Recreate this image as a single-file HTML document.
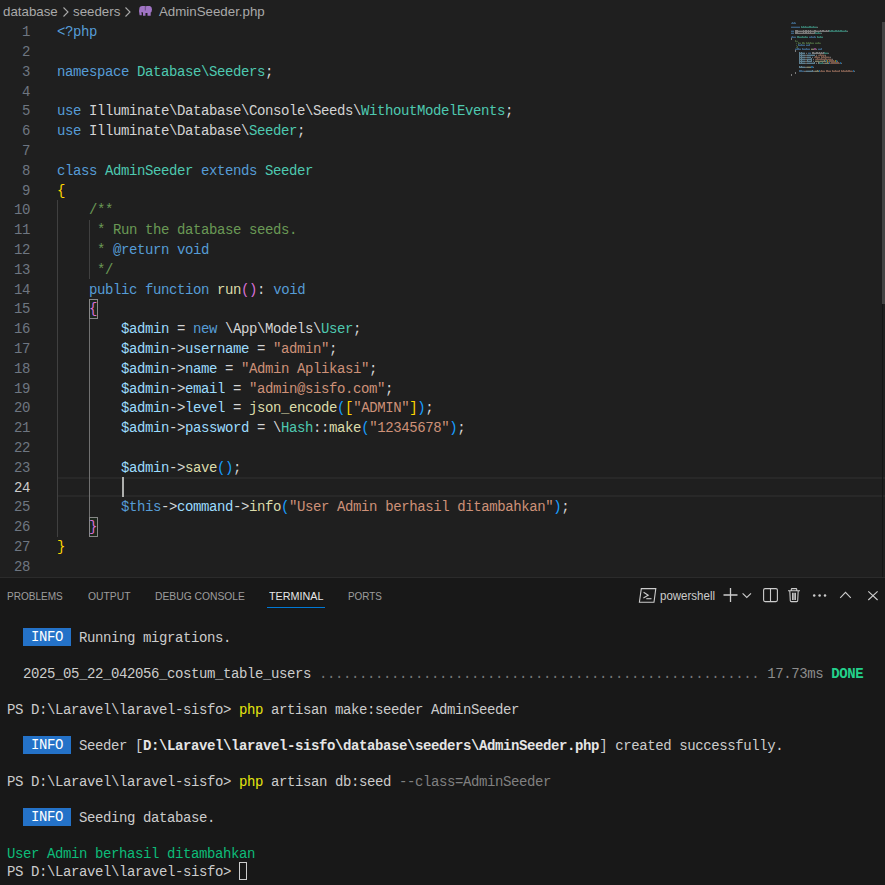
<!DOCTYPE html>
<html><head><meta charset="utf-8"><style>
*{margin:0;padding:0;box-sizing:border-box}
html,body{width:885px;height:885px;overflow:hidden;background:#1f1f1f}
body{position:relative;font-family:"Liberation Sans",sans-serif}
.crumb{position:absolute;left:0;top:0.5px;width:885px;height:22px;color:#a9a9a9;font-size:13.3px;line-height:22px;white-space:nowrap}
.crumb span{position:absolute;top:0}
.ln{position:absolute;left:0;width:30px;text-align:right;font-family:"Liberation Mono",monospace;font-size:14px;letter-spacing:-0.4px;line-height:19.8px;color:#6e7681;white-space:pre}
.ln.act{color:#cccccc}
.cl{position:absolute;left:57px;font-family:"Liberation Mono",monospace;font-size:14px;letter-spacing:-0.4px;line-height:19.8px;white-space:pre;color:#d4d4d4}
.curline{position:absolute;left:58px;width:827px;border-top:2px solid #282828;border-bottom:2px solid #282828}
.ig{position:absolute;width:1px;background:#404040}
.ig.act{background:#707070}
.box{position:absolute;width:9px;border:1px solid #888888;background:#1c261c}
.cursor{position:absolute;width:2px;background:#aeafad}
.mm{position:absolute;left:791px;top:22px;opacity:.5}
.sb{position:absolute;left:882px;top:22px;width:3px;height:282px;background:#434343}
.sbline{position:absolute;left:882px;top:22px;width:1px;height:555px;background:#151515}
.panel{position:absolute;left:0;top:577px;width:885px;height:308px;background:#181818;border-top:1px solid #2b2b2b}
.tab{position:absolute;transform-origin:0 0;top:11px;font-size:11px;line-height:14px;color:#9d9d9d;white-space:nowrap}
.tab.act{color:#e7e7e7}
.uline{position:absolute;left:267px;top:29px;width:58px;height:1px;background:#0078d4}
.tr{position:absolute;left:7px;font-family:"Liberation Mono",monospace;font-size:14px;letter-spacing:-0.4px;line-height:18px;white-space:pre;color:#cccccc}
.badge{display:inline-block;vertical-align:top;height:18px;position:relative;top:-0.8px;background:#2472c8;color:#ffffff}
.tcur{display:inline-block;vertical-align:top;position:relative;top:-0.8px;width:8px;height:18px;border:1px solid #cccccc}
.ic{position:absolute}
.ps{position:absolute;left:660px;top:588px;transform:scaleX(0.885);transform-origin:0 0;font-size:13px;line-height:16px;color:#cccccc;white-space:nowrap}
</style></head><body>
<div class="crumb">
<span style="left:3px">database</span>
<svg class="ic" style="left:62px;top:5px" width="8" height="12" viewBox="0 0 8 12"><path d="M1.5 1.5 L6 6 L1.5 10.5" fill="none" stroke="#a9a9a9" stroke-width="1.1"/></svg>
<span style="left:73px">seeders</span>
<svg class="ic" style="left:124px;top:5px" width="8" height="12" viewBox="0 0 8 12"><path d="M1.5 1.5 L6 6 L1.5 10.5" fill="none" stroke="#a9a9a9" stroke-width="1.1"/></svg>
<svg class="ic" style="left:139px;top:5px" width="14" height="11" viewBox="0 0 14 11"><path d="M0.5 1.5 Q1 0 3 0 L5.5 0 Q6 0.4 6.3 0.4 Q7 0 8 0 L11 0 Q13 0.5 13 3.5 L12.5 6 L11.7 6.5 L11.7 9.8 L8.5 9.8 L8.5 7 L6.5 7 L6.5 9.8 L4 9.8 L4 6.5 Q3 6 2.5 6 L2.8 9.3 L0.6 9.3 L0 5 Z" fill="#a074c4"/><path d="M6.3 1 L6.3 4.5" stroke="#5a3f73" stroke-width="0.8"/></svg>
<span style="left:159px">AdminSeeder.php</span>
</div>
<div class="ln" style="top:23.2px">1</div><div class="ln" style="top:43.0px">2</div><div class="ln" style="top:62.8px">3</div><div class="ln" style="top:82.6px">4</div><div class="ln" style="top:102.4px">5</div><div class="ln" style="top:122.2px">6</div><div class="ln" style="top:142.0px">7</div><div class="ln" style="top:161.8px">8</div><div class="ln" style="top:181.6px">9</div><div class="ln" style="top:201.4px">10</div><div class="ln" style="top:221.2px">11</div><div class="ln" style="top:241.0px">12</div><div class="ln" style="top:260.8px">13</div><div class="ln" style="top:280.6px">14</div><div class="ln" style="top:300.4px">15</div><div class="ln" style="top:320.2px">16</div><div class="ln" style="top:340.0px">17</div><div class="ln" style="top:359.8px">18</div><div class="ln" style="top:379.6px">19</div><div class="ln" style="top:399.4px">20</div><div class="ln" style="top:419.2px">21</div><div class="ln" style="top:439.0px">22</div><div class="ln" style="top:458.8px">23</div><div class="ln act" style="top:478.6px">24</div><div class="ln" style="top:498.4px">25</div><div class="ln" style="top:518.2px">26</div><div class="ln" style="top:538.0px">27</div><div class="ln" style="top:557.8px">28</div><div class="curline" style="top:477.4px;height:19.8px"></div><div class="ig" style="left:57px;top:200.2px;height:336.6px"></div><div class="ig" style="left:89px;top:220.0px;height:59.4px"></div><div class="ig act" style="left:89px;top:319.0px;height:198.0px"></div><div class="cl" style="top:23.2px"><span style="color:#569cd6">&lt;?php</span></div><div class="cl" style="top:62.8px"><span style="color:#569cd6">namespace</span><span style="color:#d4d4d4"> </span><span style="color:#4ec9b0">Database\Seeders</span><span style="color:#d4d4d4">;</span></div><div class="cl" style="top:102.4px"><span style="color:#569cd6">use</span><span style="color:#d4d4d4"> Illuminate\Database\Console\Seeds\</span><span style="color:#4ec9b0">WithoutModelEvents</span><span style="color:#d4d4d4">;</span></div><div class="cl" style="top:122.2px"><span style="color:#569cd6">use</span><span style="color:#d4d4d4"> Illuminate\Database\</span><span style="color:#4ec9b0">Seeder</span><span style="color:#d4d4d4">;</span></div><div class="cl" style="top:161.8px"><span style="color:#569cd6">class</span><span style="color:#d4d4d4"> </span><span style="color:#4ec9b0">AdminSeeder</span><span style="color:#d4d4d4"> </span><span style="color:#569cd6">extends</span><span style="color:#d4d4d4"> </span><span style="color:#4ec9b0">Seeder</span></div><div class="cl" style="top:181.6px"><span style="color:#ffd700">{</span></div><div class="cl" style="top:201.4px">    <span style="color:#6a9955">/**</span></div><div class="cl" style="top:221.2px">     <span style="color:#6a9955">* Run the database seeds.</span></div><div class="cl" style="top:241.0px">     <span style="color:#6a9955">* </span><span style="color:#569cd6">@return</span><span style="color:#d4d4d4"> </span><span style="color:#569cd6">void</span></div><div class="cl" style="top:260.8px">     <span style="color:#6a9955">*/</span></div><div class="cl" style="top:280.6px">    <span style="color:#569cd6">public</span><span style="color:#d4d4d4"> </span><span style="color:#569cd6">function</span><span style="color:#d4d4d4"> </span><span style="color:#dcdcaa">run</span><span style="color:#da70d6">()</span><span style="color:#d4d4d4">: </span><span style="color:#569cd6">void</span></div><div class="box" style="left:89px;top:299.2px;height:19.8px"></div><div class="cl" style="top:300.4px">    <span style="color:#da70d6">{</span></div><div class="cl" style="top:320.2px">        <span style="color:#9cdcfe">$admin</span><span style="color:#d4d4d4"> = </span><span style="color:#569cd6">new</span><span style="color:#d4d4d4"> \App\Models\</span><span style="color:#4ec9b0">User</span><span style="color:#d4d4d4">;</span></div><div class="cl" style="top:340.0px">        <span style="color:#9cdcfe">$admin</span><span style="color:#d4d4d4">-&gt;</span><span style="color:#9cdcfe">username</span><span style="color:#d4d4d4"> = </span><span style="color:#ce9178">&quot;admin&quot;</span><span style="color:#d4d4d4">;</span></div><div class="cl" style="top:359.8px">        <span style="color:#9cdcfe">$admin</span><span style="color:#d4d4d4">-&gt;</span><span style="color:#9cdcfe">name</span><span style="color:#d4d4d4"> = </span><span style="color:#ce9178">&quot;Admin Aplikasi&quot;</span><span style="color:#d4d4d4">;</span></div><div class="cl" style="top:379.6px">        <span style="color:#9cdcfe">$admin</span><span style="color:#d4d4d4">-&gt;</span><span style="color:#9cdcfe">email</span><span style="color:#d4d4d4"> = </span><span style="color:#ce9178">&quot;admin@sisfo.com&quot;</span><span style="color:#d4d4d4">;</span></div><div class="cl" style="top:399.4px">        <span style="color:#9cdcfe">$admin</span><span style="color:#d4d4d4">-&gt;</span><span style="color:#9cdcfe">level</span><span style="color:#d4d4d4"> = </span><span style="color:#dcdcaa">json_encode</span><span style="color:#179fff">(</span><span style="color:#ffd700">[</span><span style="color:#ce9178">&quot;ADMIN&quot;</span><span style="color:#ffd700">]</span><span style="color:#179fff">)</span><span style="color:#d4d4d4">;</span></div><div class="cl" style="top:419.2px">        <span style="color:#9cdcfe">$admin</span><span style="color:#d4d4d4">-&gt;</span><span style="color:#9cdcfe">password</span><span style="color:#d4d4d4"> = \</span><span style="color:#4ec9b0">Hash</span><span style="color:#d4d4d4">::</span><span style="color:#dcdcaa">make</span><span style="color:#179fff">(</span><span style="color:#ce9178">&quot;12345678&quot;</span><span style="color:#179fff">)</span><span style="color:#d4d4d4">;</span></div><div class="cl" style="top:458.8px">        <span style="color:#9cdcfe">$admin</span><span style="color:#d4d4d4">-&gt;</span><span style="color:#dcdcaa">save</span><span style="color:#179fff">()</span><span style="color:#d4d4d4">;</span></div><div class="cl" style="top:498.4px">        <span style="color:#569cd6">$this</span><span style="color:#d4d4d4">-&gt;</span><span style="color:#9cdcfe">command</span><span style="color:#d4d4d4">-&gt;</span><span style="color:#dcdcaa">info</span><span style="color:#179fff">(</span><span style="color:#ce9178">&quot;User Admin berhasil ditambahkan&quot;</span><span style="color:#179fff">)</span><span style="color:#d4d4d4">;</span></div><div class="box" style="left:89px;top:517.0px;height:19.8px"></div><div class="cl" style="top:518.2px">    <span style="color:#da70d6">}</span></div><div class="cl" style="top:538.0px"><span style="color:#ffd700">}</span></div><div class="cursor" style="left:122px;top:477.4px;height:19.8px"></div>
<svg class="mm" width="80" height="60" viewBox="0 0 80 60"><rect x="0" y="0.8" width="1" height="1" fill="#569cd6"/><rect x="1" y="0" width="1" height="2" fill="#569cd6"/><rect x="2" y="0.6" width="1" height="1.4" fill="#569cd6"/><rect x="3" y="0" width="1" height="2" fill="#569cd6"/><rect x="4" y="0.6" width="1" height="1.4" fill="#569cd6"/><rect x="0" y="4.6" width="1" height="1.4" fill="#569cd6"/><rect x="1" y="4.6" width="1" height="1.4" fill="#569cd6"/><rect x="2" y="4.6" width="1" height="1.4" fill="#569cd6"/><rect x="3" y="4.6" width="1" height="1.4" fill="#569cd6"/><rect x="4" y="4.6" width="1" height="1.4" fill="#569cd6"/><rect x="5" y="4.6" width="1" height="1.4" fill="#569cd6"/><rect x="6" y="4.6" width="1" height="1.4" fill="#569cd6"/><rect x="7" y="4.6" width="1" height="1.4" fill="#569cd6"/><rect x="8" y="4.6" width="1" height="1.4" fill="#569cd6"/><rect x="10" y="4" width="1" height="2" fill="#4ec9b0"/><rect x="11" y="4.6" width="1" height="1.4" fill="#4ec9b0"/><rect x="12" y="4" width="1" height="2" fill="#4ec9b0"/><rect x="13" y="4.6" width="1" height="1.4" fill="#4ec9b0"/><rect x="14" y="4" width="1" height="2" fill="#4ec9b0"/><rect x="15" y="4.6" width="1" height="1.4" fill="#4ec9b0"/><rect x="16" y="4.6" width="1" height="1.4" fill="#4ec9b0"/><rect x="17" y="4.6" width="1" height="1.4" fill="#4ec9b0"/><rect x="18" y="4" width="1" height="2" fill="#4ec9b0"/><rect x="19" y="4" width="1" height="2" fill="#4ec9b0"/><rect x="20" y="4.6" width="1" height="1.4" fill="#4ec9b0"/><rect x="21" y="4.6" width="1" height="1.4" fill="#4ec9b0"/><rect x="22" y="4" width="1" height="2" fill="#4ec9b0"/><rect x="23" y="4.6" width="1" height="1.4" fill="#4ec9b0"/><rect x="24" y="4.6" width="1" height="1.4" fill="#4ec9b0"/><rect x="25" y="4.6" width="1" height="1.4" fill="#4ec9b0"/><rect x="26" y="4.8" width="1" height="1" fill="#d4d4d4"/><rect x="0" y="8.6" width="1" height="1.4" fill="#569cd6"/><rect x="1" y="8.6" width="1" height="1.4" fill="#569cd6"/><rect x="2" y="8.6" width="1" height="1.4" fill="#569cd6"/><rect x="4" y="8" width="1" height="2" fill="#d4d4d4"/><rect x="5" y="8" width="1" height="2" fill="#d4d4d4"/><rect x="6" y="8" width="1" height="2" fill="#d4d4d4"/><rect x="7" y="8.6" width="1" height="1.4" fill="#d4d4d4"/><rect x="8" y="8.6" width="1" height="1.4" fill="#d4d4d4"/><rect x="9" y="8.6" width="1" height="1.4" fill="#d4d4d4"/><rect x="10" y="8.6" width="1" height="1.4" fill="#d4d4d4"/><rect x="11" y="8.6" width="1" height="1.4" fill="#d4d4d4"/><rect x="12" y="8" width="1" height="2" fill="#d4d4d4"/><rect x="13" y="8.6" width="1" height="1.4" fill="#d4d4d4"/><rect x="14" y="8" width="1" height="2" fill="#d4d4d4"/><rect x="15" y="8" width="1" height="2" fill="#d4d4d4"/><rect x="16" y="8.6" width="1" height="1.4" fill="#d4d4d4"/><rect x="17" y="8" width="1" height="2" fill="#d4d4d4"/><rect x="18" y="8.6" width="1" height="1.4" fill="#d4d4d4"/><rect x="19" y="8" width="1" height="2" fill="#d4d4d4"/><rect x="20" y="8.6" width="1" height="1.4" fill="#d4d4d4"/><rect x="21" y="8.6" width="1" height="1.4" fill="#d4d4d4"/><rect x="22" y="8.6" width="1" height="1.4" fill="#d4d4d4"/><rect x="23" y="8" width="1" height="2" fill="#d4d4d4"/><rect x="24" y="8" width="1" height="2" fill="#d4d4d4"/><rect x="25" y="8.6" width="1" height="1.4" fill="#d4d4d4"/><rect x="26" y="8.6" width="1" height="1.4" fill="#d4d4d4"/><rect x="27" y="8.6" width="1" height="1.4" fill="#d4d4d4"/><rect x="28" y="8.6" width="1" height="1.4" fill="#d4d4d4"/><rect x="29" y="8" width="1" height="2" fill="#d4d4d4"/><rect x="30" y="8.6" width="1" height="1.4" fill="#d4d4d4"/><rect x="31" y="8" width="1" height="2" fill="#d4d4d4"/><rect x="32" y="8" width="1" height="2" fill="#d4d4d4"/><rect x="33" y="8.6" width="1" height="1.4" fill="#d4d4d4"/><rect x="34" y="8.6" width="1" height="1.4" fill="#d4d4d4"/><rect x="35" y="8" width="1" height="2" fill="#d4d4d4"/><rect x="36" y="8.6" width="1" height="1.4" fill="#d4d4d4"/><rect x="37" y="8" width="1" height="2" fill="#d4d4d4"/><rect x="38" y="8" width="1" height="2" fill="#4ec9b0"/><rect x="39" y="8.6" width="1" height="1.4" fill="#4ec9b0"/><rect x="40" y="8" width="1" height="2" fill="#4ec9b0"/><rect x="41" y="8" width="1" height="2" fill="#4ec9b0"/><rect x="42" y="8.6" width="1" height="1.4" fill="#4ec9b0"/><rect x="43" y="8.6" width="1" height="1.4" fill="#4ec9b0"/><rect x="44" y="8" width="1" height="2" fill="#4ec9b0"/><rect x="45" y="8" width="1" height="2" fill="#4ec9b0"/><rect x="46" y="8.6" width="1" height="1.4" fill="#4ec9b0"/><rect x="47" y="8" width="1" height="2" fill="#4ec9b0"/><rect x="48" y="8.6" width="1" height="1.4" fill="#4ec9b0"/><rect x="49" y="8" width="1" height="2" fill="#4ec9b0"/><rect x="50" y="8" width="1" height="2" fill="#4ec9b0"/><rect x="51" y="8.6" width="1" height="1.4" fill="#4ec9b0"/><rect x="52" y="8.6" width="1" height="1.4" fill="#4ec9b0"/><rect x="53" y="8.6" width="1" height="1.4" fill="#4ec9b0"/><rect x="54" y="8" width="1" height="2" fill="#4ec9b0"/><rect x="55" y="8.6" width="1" height="1.4" fill="#4ec9b0"/><rect x="56" y="8.8" width="1" height="1" fill="#d4d4d4"/><rect x="0" y="10.6" width="1" height="1.4" fill="#569cd6"/><rect x="1" y="10.6" width="1" height="1.4" fill="#569cd6"/><rect x="2" y="10.6" width="1" height="1.4" fill="#569cd6"/><rect x="4" y="10" width="1" height="2" fill="#d4d4d4"/><rect x="5" y="10" width="1" height="2" fill="#d4d4d4"/><rect x="6" y="10" width="1" height="2" fill="#d4d4d4"/><rect x="7" y="10.6" width="1" height="1.4" fill="#d4d4d4"/><rect x="8" y="10.6" width="1" height="1.4" fill="#d4d4d4"/><rect x="9" y="10.6" width="1" height="1.4" fill="#d4d4d4"/><rect x="10" y="10.6" width="1" height="1.4" fill="#d4d4d4"/><rect x="11" y="10.6" width="1" height="1.4" fill="#d4d4d4"/><rect x="12" y="10" width="1" height="2" fill="#d4d4d4"/><rect x="13" y="10.6" width="1" height="1.4" fill="#d4d4d4"/><rect x="14" y="10" width="1" height="2" fill="#d4d4d4"/><rect x="15" y="10" width="1" height="2" fill="#d4d4d4"/><rect x="16" y="10.6" width="1" height="1.4" fill="#d4d4d4"/><rect x="17" y="10" width="1" height="2" fill="#d4d4d4"/><rect x="18" y="10.6" width="1" height="1.4" fill="#d4d4d4"/><rect x="19" y="10" width="1" height="2" fill="#d4d4d4"/><rect x="20" y="10.6" width="1" height="1.4" fill="#d4d4d4"/><rect x="21" y="10.6" width="1" height="1.4" fill="#d4d4d4"/><rect x="22" y="10.6" width="1" height="1.4" fill="#d4d4d4"/><rect x="23" y="10" width="1" height="2" fill="#d4d4d4"/><rect x="24" y="10" width="1" height="2" fill="#4ec9b0"/><rect x="25" y="10.6" width="1" height="1.4" fill="#4ec9b0"/><rect x="26" y="10.6" width="1" height="1.4" fill="#4ec9b0"/><rect x="27" y="10" width="1" height="2" fill="#4ec9b0"/><rect x="28" y="10.6" width="1" height="1.4" fill="#4ec9b0"/><rect x="29" y="10.6" width="1" height="1.4" fill="#4ec9b0"/><rect x="30" y="10.8" width="1" height="1" fill="#d4d4d4"/><rect x="0" y="14.6" width="1" height="1.4" fill="#569cd6"/><rect x="1" y="14" width="1" height="2" fill="#569cd6"/><rect x="2" y="14.6" width="1" height="1.4" fill="#569cd6"/><rect x="3" y="14.6" width="1" height="1.4" fill="#569cd6"/><rect x="4" y="14.6" width="1" height="1.4" fill="#569cd6"/><rect x="6" y="14" width="1" height="2" fill="#4ec9b0"/><rect x="7" y="14" width="1" height="2" fill="#4ec9b0"/><rect x="8" y="14.6" width="1" height="1.4" fill="#4ec9b0"/><rect x="9" y="14.6" width="1" height="1.4" fill="#4ec9b0"/><rect x="10" y="14.6" width="1" height="1.4" fill="#4ec9b0"/><rect x="11" y="14" width="1" height="2" fill="#4ec9b0"/><rect x="12" y="14.6" width="1" height="1.4" fill="#4ec9b0"/><rect x="13" y="14.6" width="1" height="1.4" fill="#4ec9b0"/><rect x="14" y="14" width="1" height="2" fill="#4ec9b0"/><rect x="15" y="14.6" width="1" height="1.4" fill="#4ec9b0"/><rect x="16" y="14.6" width="1" height="1.4" fill="#4ec9b0"/><rect x="18" y="14.6" width="1" height="1.4" fill="#569cd6"/><rect x="19" y="14.6" width="1" height="1.4" fill="#569cd6"/><rect x="20" y="14" width="1" height="2" fill="#569cd6"/><rect x="21" y="14.6" width="1" height="1.4" fill="#569cd6"/><rect x="22" y="14.6" width="1" height="1.4" fill="#569cd6"/><rect x="23" y="14" width="1" height="2" fill="#569cd6"/><rect x="24" y="14.6" width="1" height="1.4" fill="#569cd6"/><rect x="26" y="14" width="1" height="2" fill="#4ec9b0"/><rect x="27" y="14.6" width="1" height="1.4" fill="#4ec9b0"/><rect x="28" y="14.6" width="1" height="1.4" fill="#4ec9b0"/><rect x="29" y="14" width="1" height="2" fill="#4ec9b0"/><rect x="30" y="14.6" width="1" height="1.4" fill="#4ec9b0"/><rect x="31" y="14.6" width="1" height="1.4" fill="#4ec9b0"/><rect x="0" y="16" width="1" height="2" fill="#d4d4d4"/><rect x="4" y="18" width="1" height="2" fill="#6a9955"/><rect x="5" y="18.8" width="1" height="1" fill="#6a9955"/><rect x="6" y="18.8" width="1" height="1" fill="#6a9955"/><rect x="5" y="20.8" width="1" height="1" fill="#6a9955"/><rect x="7" y="20" width="1" height="2" fill="#6a9955"/><rect x="8" y="20.6" width="1" height="1.4" fill="#6a9955"/><rect x="9" y="20.6" width="1" height="1.4" fill="#6a9955"/><rect x="11" y="20" width="1" height="2" fill="#6a9955"/><rect x="12" y="20" width="1" height="2" fill="#6a9955"/><rect x="13" y="20.6" width="1" height="1.4" fill="#6a9955"/><rect x="15" y="20" width="1" height="2" fill="#6a9955"/><rect x="16" y="20.6" width="1" height="1.4" fill="#6a9955"/><rect x="17" y="20" width="1" height="2" fill="#6a9955"/><rect x="18" y="20.6" width="1" height="1.4" fill="#6a9955"/><rect x="19" y="20" width="1" height="2" fill="#6a9955"/><rect x="20" y="20.6" width="1" height="1.4" fill="#6a9955"/><rect x="21" y="20.6" width="1" height="1.4" fill="#6a9955"/><rect x="22" y="20.6" width="1" height="1.4" fill="#6a9955"/><rect x="24" y="20.6" width="1" height="1.4" fill="#6a9955"/><rect x="25" y="20.6" width="1" height="1.4" fill="#6a9955"/><rect x="26" y="20.6" width="1" height="1.4" fill="#6a9955"/><rect x="27" y="20" width="1" height="2" fill="#6a9955"/><rect x="28" y="20.6" width="1" height="1.4" fill="#6a9955"/><rect x="29" y="20.8" width="1" height="1" fill="#6a9955"/><rect x="5" y="22.8" width="1" height="1" fill="#6a9955"/><rect x="7" y="22" width="1" height="2" fill="#569cd6"/><rect x="8" y="22.6" width="1" height="1.4" fill="#569cd6"/><rect x="9" y="22.6" width="1" height="1.4" fill="#569cd6"/><rect x="10" y="22" width="1" height="2" fill="#569cd6"/><rect x="11" y="22.6" width="1" height="1.4" fill="#569cd6"/><rect x="12" y="22.6" width="1" height="1.4" fill="#569cd6"/><rect x="13" y="22.6" width="1" height="1.4" fill="#569cd6"/><rect x="15" y="22.6" width="1" height="1.4" fill="#569cd6"/><rect x="16" y="22.6" width="1" height="1.4" fill="#569cd6"/><rect x="17" y="22.6" width="1" height="1.4" fill="#569cd6"/><rect x="18" y="22" width="1" height="2" fill="#569cd6"/><rect x="5" y="24.8" width="1" height="1" fill="#6a9955"/><rect x="6" y="24" width="1" height="2" fill="#6a9955"/><rect x="4" y="26.6" width="1" height="1.4" fill="#569cd6"/><rect x="5" y="26.6" width="1" height="1.4" fill="#569cd6"/><rect x="6" y="26" width="1" height="2" fill="#569cd6"/><rect x="7" y="26" width="1" height="2" fill="#569cd6"/><rect x="8" y="26.6" width="1" height="1.4" fill="#569cd6"/><rect x="9" y="26.6" width="1" height="1.4" fill="#569cd6"/><rect x="11" y="26" width="1" height="2" fill="#569cd6"/><rect x="12" y="26.6" width="1" height="1.4" fill="#569cd6"/><rect x="13" y="26.6" width="1" height="1.4" fill="#569cd6"/><rect x="14" y="26.6" width="1" height="1.4" fill="#569cd6"/><rect x="15" y="26" width="1" height="2" fill="#569cd6"/><rect x="16" y="26.6" width="1" height="1.4" fill="#569cd6"/><rect x="17" y="26.6" width="1" height="1.4" fill="#569cd6"/><rect x="18" y="26.6" width="1" height="1.4" fill="#569cd6"/><rect x="20" y="26.6" width="1" height="1.4" fill="#dcdcaa"/><rect x="21" y="26.6" width="1" height="1.4" fill="#dcdcaa"/><rect x="22" y="26.6" width="1" height="1.4" fill="#dcdcaa"/><rect x="23" y="26" width="1" height="2" fill="#da70d6"/><rect x="24" y="26" width="1" height="2" fill="#da70d6"/><rect x="25" y="26.8" width="1" height="1" fill="#d4d4d4"/><rect x="27" y="26.6" width="1" height="1.4" fill="#569cd6"/><rect x="28" y="26.6" width="1" height="1.4" fill="#569cd6"/><rect x="29" y="26.6" width="1" height="1.4" fill="#569cd6"/><rect x="30" y="26" width="1" height="2" fill="#569cd6"/><rect x="4" y="28" width="1" height="2" fill="#d4d4d4"/><rect x="8" y="30" width="1" height="2" fill="#9cdcfe"/><rect x="9" y="30.6" width="1" height="1.4" fill="#9cdcfe"/><rect x="10" y="30" width="1" height="2" fill="#9cdcfe"/><rect x="11" y="30.6" width="1" height="1.4" fill="#9cdcfe"/><rect x="12" y="30.6" width="1" height="1.4" fill="#9cdcfe"/><rect x="13" y="30.6" width="1" height="1.4" fill="#9cdcfe"/><rect x="15" y="30.8" width="1" height="1" fill="#d4d4d4"/><rect x="17" y="30.6" width="1" height="1.4" fill="#569cd6"/><rect x="18" y="30.6" width="1" height="1.4" fill="#569cd6"/><rect x="19" y="30.6" width="1" height="1.4" fill="#569cd6"/><rect x="21" y="30" width="1" height="2" fill="#d4d4d4"/><rect x="22" y="30" width="1" height="2" fill="#d4d4d4"/><rect x="23" y="30.6" width="1" height="1.4" fill="#d4d4d4"/><rect x="24" y="30.6" width="1" height="1.4" fill="#d4d4d4"/><rect x="25" y="30" width="1" height="2" fill="#d4d4d4"/><rect x="26" y="30" width="1" height="2" fill="#d4d4d4"/><rect x="27" y="30.6" width="1" height="1.4" fill="#d4d4d4"/><rect x="28" y="30" width="1" height="2" fill="#d4d4d4"/><rect x="29" y="30.6" width="1" height="1.4" fill="#d4d4d4"/><rect x="30" y="30" width="1" height="2" fill="#d4d4d4"/><rect x="31" y="30.6" width="1" height="1.4" fill="#d4d4d4"/><rect x="32" y="30" width="1" height="2" fill="#d4d4d4"/><rect x="33" y="30" width="1" height="2" fill="#4ec9b0"/><rect x="34" y="30.6" width="1" height="1.4" fill="#4ec9b0"/><rect x="35" y="30.6" width="1" height="1.4" fill="#4ec9b0"/><rect x="36" y="30.6" width="1" height="1.4" fill="#4ec9b0"/><rect x="37" y="30.8" width="1" height="1" fill="#d4d4d4"/><rect x="8" y="32" width="1" height="2" fill="#9cdcfe"/><rect x="9" y="32.6" width="1" height="1.4" fill="#9cdcfe"/><rect x="10" y="32" width="1" height="2" fill="#9cdcfe"/><rect x="11" y="32.6" width="1" height="1.4" fill="#9cdcfe"/><rect x="12" y="32.6" width="1" height="1.4" fill="#9cdcfe"/><rect x="13" y="32.6" width="1" height="1.4" fill="#9cdcfe"/><rect x="14" y="32.8" width="1" height="1" fill="#d4d4d4"/><rect x="15" y="32.8" width="1" height="1" fill="#d4d4d4"/><rect x="16" y="32.6" width="1" height="1.4" fill="#9cdcfe"/><rect x="17" y="32.6" width="1" height="1.4" fill="#9cdcfe"/><rect x="18" y="32.6" width="1" height="1.4" fill="#9cdcfe"/><rect x="19" y="32.6" width="1" height="1.4" fill="#9cdcfe"/><rect x="20" y="32.6" width="1" height="1.4" fill="#9cdcfe"/><rect x="21" y="32.6" width="1" height="1.4" fill="#9cdcfe"/><rect x="22" y="32.6" width="1" height="1.4" fill="#9cdcfe"/><rect x="23" y="32.6" width="1" height="1.4" fill="#9cdcfe"/><rect x="25" y="32.8" width="1" height="1" fill="#d4d4d4"/><rect x="27" y="32.8" width="1" height="1" fill="#ce9178"/><rect x="28" y="32.6" width="1" height="1.4" fill="#ce9178"/><rect x="29" y="32" width="1" height="2" fill="#ce9178"/><rect x="30" y="32.6" width="1" height="1.4" fill="#ce9178"/><rect x="31" y="32.6" width="1" height="1.4" fill="#ce9178"/><rect x="32" y="32.6" width="1" height="1.4" fill="#ce9178"/><rect x="33" y="32.8" width="1" height="1" fill="#ce9178"/><rect x="34" y="32.8" width="1" height="1" fill="#d4d4d4"/><rect x="8" y="34" width="1" height="2" fill="#9cdcfe"/><rect x="9" y="34.6" width="1" height="1.4" fill="#9cdcfe"/><rect x="10" y="34" width="1" height="2" fill="#9cdcfe"/><rect x="11" y="34.6" width="1" height="1.4" fill="#9cdcfe"/><rect x="12" y="34.6" width="1" height="1.4" fill="#9cdcfe"/><rect x="13" y="34.6" width="1" height="1.4" fill="#9cdcfe"/><rect x="14" y="34.8" width="1" height="1" fill="#d4d4d4"/><rect x="15" y="34.8" width="1" height="1" fill="#d4d4d4"/><rect x="16" y="34.6" width="1" height="1.4" fill="#9cdcfe"/><rect x="17" y="34.6" width="1" height="1.4" fill="#9cdcfe"/><rect x="18" y="34.6" width="1" height="1.4" fill="#9cdcfe"/><rect x="19" y="34.6" width="1" height="1.4" fill="#9cdcfe"/><rect x="21" y="34.8" width="1" height="1" fill="#d4d4d4"/><rect x="23" y="34.8" width="1" height="1" fill="#ce9178"/><rect x="24" y="34" width="1" height="2" fill="#ce9178"/><rect x="25" y="34" width="1" height="2" fill="#ce9178"/><rect x="26" y="34.6" width="1" height="1.4" fill="#ce9178"/><rect x="27" y="34.6" width="1" height="1.4" fill="#ce9178"/><rect x="28" y="34.6" width="1" height="1.4" fill="#ce9178"/><rect x="30" y="34" width="1" height="2" fill="#ce9178"/><rect x="31" y="34.6" width="1" height="1.4" fill="#ce9178"/><rect x="32" y="34" width="1" height="2" fill="#ce9178"/><rect x="33" y="34.6" width="1" height="1.4" fill="#ce9178"/><rect x="34" y="34" width="1" height="2" fill="#ce9178"/><rect x="35" y="34.6" width="1" height="1.4" fill="#ce9178"/><rect x="36" y="34.6" width="1" height="1.4" fill="#ce9178"/><rect x="37" y="34.6" width="1" height="1.4" fill="#ce9178"/><rect x="38" y="34.8" width="1" height="1" fill="#ce9178"/><rect x="39" y="34.8" width="1" height="1" fill="#d4d4d4"/><rect x="8" y="36" width="1" height="2" fill="#9cdcfe"/><rect x="9" y="36.6" width="1" height="1.4" fill="#9cdcfe"/><rect x="10" y="36" width="1" height="2" fill="#9cdcfe"/><rect x="11" y="36.6" width="1" height="1.4" fill="#9cdcfe"/><rect x="12" y="36.6" width="1" height="1.4" fill="#9cdcfe"/><rect x="13" y="36.6" width="1" height="1.4" fill="#9cdcfe"/><rect x="14" y="36.8" width="1" height="1" fill="#d4d4d4"/><rect x="15" y="36.8" width="1" height="1" fill="#d4d4d4"/><rect x="16" y="36.6" width="1" height="1.4" fill="#9cdcfe"/><rect x="17" y="36.6" width="1" height="1.4" fill="#9cdcfe"/><rect x="18" y="36.6" width="1" height="1.4" fill="#9cdcfe"/><rect x="19" y="36.6" width="1" height="1.4" fill="#9cdcfe"/><rect x="20" y="36" width="1" height="2" fill="#9cdcfe"/><rect x="22" y="36.8" width="1" height="1" fill="#d4d4d4"/><rect x="24" y="36.8" width="1" height="1" fill="#ce9178"/><rect x="25" y="36.6" width="1" height="1.4" fill="#ce9178"/><rect x="26" y="36" width="1" height="2" fill="#ce9178"/><rect x="27" y="36.6" width="1" height="1.4" fill="#ce9178"/><rect x="28" y="36.6" width="1" height="1.4" fill="#ce9178"/><rect x="29" y="36.6" width="1" height="1.4" fill="#ce9178"/><rect x="30" y="36" width="1" height="2" fill="#ce9178"/><rect x="31" y="36.6" width="1" height="1.4" fill="#ce9178"/><rect x="32" y="36.6" width="1" height="1.4" fill="#ce9178"/><rect x="33" y="36.6" width="1" height="1.4" fill="#ce9178"/><rect x="34" y="36" width="1" height="2" fill="#ce9178"/><rect x="35" y="36.6" width="1" height="1.4" fill="#ce9178"/><rect x="36" y="36.8" width="1" height="1" fill="#ce9178"/><rect x="37" y="36.6" width="1" height="1.4" fill="#ce9178"/><rect x="38" y="36.6" width="1" height="1.4" fill="#ce9178"/><rect x="39" y="36.6" width="1" height="1.4" fill="#ce9178"/><rect x="40" y="36.8" width="1" height="1" fill="#ce9178"/><rect x="41" y="36.8" width="1" height="1" fill="#d4d4d4"/><rect x="8" y="38" width="1" height="2" fill="#9cdcfe"/><rect x="9" y="38.6" width="1" height="1.4" fill="#9cdcfe"/><rect x="10" y="38" width="1" height="2" fill="#9cdcfe"/><rect x="11" y="38.6" width="1" height="1.4" fill="#9cdcfe"/><rect x="12" y="38.6" width="1" height="1.4" fill="#9cdcfe"/><rect x="13" y="38.6" width="1" height="1.4" fill="#9cdcfe"/><rect x="14" y="38.8" width="1" height="1" fill="#d4d4d4"/><rect x="15" y="38.8" width="1" height="1" fill="#d4d4d4"/><rect x="16" y="38" width="1" height="2" fill="#9cdcfe"/><rect x="17" y="38.6" width="1" height="1.4" fill="#9cdcfe"/><rect x="18" y="38.6" width="1" height="1.4" fill="#9cdcfe"/><rect x="19" y="38.6" width="1" height="1.4" fill="#9cdcfe"/><rect x="20" y="38" width="1" height="2" fill="#9cdcfe"/><rect x="22" y="38.8" width="1" height="1" fill="#d4d4d4"/><rect x="24" y="38.6" width="1" height="1.4" fill="#dcdcaa"/><rect x="25" y="38.6" width="1" height="1.4" fill="#dcdcaa"/><rect x="26" y="38.6" width="1" height="1.4" fill="#dcdcaa"/><rect x="27" y="38.6" width="1" height="1.4" fill="#dcdcaa"/><rect x="28" y="38.8" width="1" height="1" fill="#dcdcaa"/><rect x="29" y="38.6" width="1" height="1.4" fill="#dcdcaa"/><rect x="30" y="38.6" width="1" height="1.4" fill="#dcdcaa"/><rect x="31" y="38.6" width="1" height="1.4" fill="#dcdcaa"/><rect x="32" y="38.6" width="1" height="1.4" fill="#dcdcaa"/><rect x="33" y="38" width="1" height="2" fill="#dcdcaa"/><rect x="34" y="38.6" width="1" height="1.4" fill="#dcdcaa"/><rect x="35" y="38" width="1" height="2" fill="#179fff"/><rect x="36" y="38" width="1" height="2" fill="#ffd700"/><rect x="37" y="38.8" width="1" height="1" fill="#ce9178"/><rect x="38" y="38" width="1" height="2" fill="#ce9178"/><rect x="39" y="38" width="1" height="2" fill="#ce9178"/><rect x="40" y="38" width="1" height="2" fill="#ce9178"/><rect x="41" y="38" width="1" height="2" fill="#ce9178"/><rect x="42" y="38" width="1" height="2" fill="#ce9178"/><rect x="43" y="38.8" width="1" height="1" fill="#ce9178"/><rect x="44" y="38" width="1" height="2" fill="#ffd700"/><rect x="45" y="38" width="1" height="2" fill="#179fff"/><rect x="46" y="38.8" width="1" height="1" fill="#d4d4d4"/><rect x="8" y="40" width="1" height="2" fill="#9cdcfe"/><rect x="9" y="40.6" width="1" height="1.4" fill="#9cdcfe"/><rect x="10" y="40" width="1" height="2" fill="#9cdcfe"/><rect x="11" y="40.6" width="1" height="1.4" fill="#9cdcfe"/><rect x="12" y="40.6" width="1" height="1.4" fill="#9cdcfe"/><rect x="13" y="40.6" width="1" height="1.4" fill="#9cdcfe"/><rect x="14" y="40.8" width="1" height="1" fill="#d4d4d4"/><rect x="15" y="40.8" width="1" height="1" fill="#d4d4d4"/><rect x="16" y="40.6" width="1" height="1.4" fill="#9cdcfe"/><rect x="17" y="40.6" width="1" height="1.4" fill="#9cdcfe"/><rect x="18" y="40.6" width="1" height="1.4" fill="#9cdcfe"/><rect x="19" y="40.6" width="1" height="1.4" fill="#9cdcfe"/><rect x="20" y="40.6" width="1" height="1.4" fill="#9cdcfe"/><rect x="21" y="40.6" width="1" height="1.4" fill="#9cdcfe"/><rect x="22" y="40.6" width="1" height="1.4" fill="#9cdcfe"/><rect x="23" y="40" width="1" height="2" fill="#9cdcfe"/><rect x="25" y="40.8" width="1" height="1" fill="#d4d4d4"/><rect x="27" y="40" width="1" height="2" fill="#d4d4d4"/><rect x="28" y="40" width="1" height="2" fill="#4ec9b0"/><rect x="29" y="40.6" width="1" height="1.4" fill="#4ec9b0"/><rect x="30" y="40.6" width="1" height="1.4" fill="#4ec9b0"/><rect x="31" y="40" width="1" height="2" fill="#4ec9b0"/><rect x="32" y="40.8" width="1" height="1" fill="#d4d4d4"/><rect x="33" y="40.8" width="1" height="1" fill="#d4d4d4"/><rect x="34" y="40.6" width="1" height="1.4" fill="#dcdcaa"/><rect x="35" y="40.6" width="1" height="1.4" fill="#dcdcaa"/><rect x="36" y="40" width="1" height="2" fill="#dcdcaa"/><rect x="37" y="40.6" width="1" height="1.4" fill="#dcdcaa"/><rect x="38" y="40" width="1" height="2" fill="#179fff"/><rect x="39" y="40.8" width="1" height="1" fill="#ce9178"/><rect x="40" y="40" width="1" height="2" fill="#ce9178"/><rect x="41" y="40" width="1" height="2" fill="#ce9178"/><rect x="42" y="40" width="1" height="2" fill="#ce9178"/><rect x="43" y="40" width="1" height="2" fill="#ce9178"/><rect x="44" y="40" width="1" height="2" fill="#ce9178"/><rect x="45" y="40" width="1" height="2" fill="#ce9178"/><rect x="46" y="40" width="1" height="2" fill="#ce9178"/><rect x="47" y="40" width="1" height="2" fill="#ce9178"/><rect x="48" y="40.8" width="1" height="1" fill="#ce9178"/><rect x="49" y="40" width="1" height="2" fill="#179fff"/><rect x="50" y="40.8" width="1" height="1" fill="#d4d4d4"/><rect x="8" y="44" width="1" height="2" fill="#9cdcfe"/><rect x="9" y="44.6" width="1" height="1.4" fill="#9cdcfe"/><rect x="10" y="44" width="1" height="2" fill="#9cdcfe"/><rect x="11" y="44.6" width="1" height="1.4" fill="#9cdcfe"/><rect x="12" y="44.6" width="1" height="1.4" fill="#9cdcfe"/><rect x="13" y="44.6" width="1" height="1.4" fill="#9cdcfe"/><rect x="14" y="44.8" width="1" height="1" fill="#d4d4d4"/><rect x="15" y="44.8" width="1" height="1" fill="#d4d4d4"/><rect x="16" y="44.6" width="1" height="1.4" fill="#dcdcaa"/><rect x="17" y="44.6" width="1" height="1.4" fill="#dcdcaa"/><rect x="18" y="44.6" width="1" height="1.4" fill="#dcdcaa"/><rect x="19" y="44.6" width="1" height="1.4" fill="#dcdcaa"/><rect x="20" y="44" width="1" height="2" fill="#179fff"/><rect x="21" y="44" width="1" height="2" fill="#179fff"/><rect x="22" y="44.8" width="1" height="1" fill="#d4d4d4"/><rect x="8" y="48" width="1" height="2" fill="#569cd6"/><rect x="9" y="48" width="1" height="2" fill="#569cd6"/><rect x="10" y="48" width="1" height="2" fill="#569cd6"/><rect x="11" y="48.6" width="1" height="1.4" fill="#569cd6"/><rect x="12" y="48.6" width="1" height="1.4" fill="#569cd6"/><rect x="13" y="48.8" width="1" height="1" fill="#d4d4d4"/><rect x="14" y="48.8" width="1" height="1" fill="#d4d4d4"/><rect x="15" y="48.6" width="1" height="1.4" fill="#9cdcfe"/><rect x="16" y="48.6" width="1" height="1.4" fill="#9cdcfe"/><rect x="17" y="48.6" width="1" height="1.4" fill="#9cdcfe"/><rect x="18" y="48.6" width="1" height="1.4" fill="#9cdcfe"/><rect x="19" y="48.6" width="1" height="1.4" fill="#9cdcfe"/><rect x="20" y="48.6" width="1" height="1.4" fill="#9cdcfe"/><rect x="21" y="48" width="1" height="2" fill="#9cdcfe"/><rect x="22" y="48.8" width="1" height="1" fill="#d4d4d4"/><rect x="23" y="48.8" width="1" height="1" fill="#d4d4d4"/><rect x="24" y="48.6" width="1" height="1.4" fill="#dcdcaa"/><rect x="25" y="48.6" width="1" height="1.4" fill="#dcdcaa"/><rect x="26" y="48" width="1" height="2" fill="#dcdcaa"/><rect x="27" y="48.6" width="1" height="1.4" fill="#dcdcaa"/><rect x="28" y="48" width="1" height="2" fill="#179fff"/><rect x="29" y="48.8" width="1" height="1" fill="#ce9178"/><rect x="30" y="48" width="1" height="2" fill="#ce9178"/><rect x="31" y="48.6" width="1" height="1.4" fill="#ce9178"/><rect x="32" y="48.6" width="1" height="1.4" fill="#ce9178"/><rect x="33" y="48.6" width="1" height="1.4" fill="#ce9178"/><rect x="35" y="48" width="1" height="2" fill="#ce9178"/><rect x="36" y="48" width="1" height="2" fill="#ce9178"/><rect x="37" y="48.6" width="1" height="1.4" fill="#ce9178"/><rect x="38" y="48.6" width="1" height="1.4" fill="#ce9178"/><rect x="39" y="48.6" width="1" height="1.4" fill="#ce9178"/><rect x="41" y="48" width="1" height="2" fill="#ce9178"/><rect x="42" y="48.6" width="1" height="1.4" fill="#ce9178"/><rect x="43" y="48.6" width="1" height="1.4" fill="#ce9178"/><rect x="44" y="48" width="1" height="2" fill="#ce9178"/><rect x="45" y="48.6" width="1" height="1.4" fill="#ce9178"/><rect x="46" y="48.6" width="1" height="1.4" fill="#ce9178"/><rect x="47" y="48.6" width="1" height="1.4" fill="#ce9178"/><rect x="48" y="48" width="1" height="2" fill="#ce9178"/><rect x="50" y="48" width="1" height="2" fill="#ce9178"/><rect x="51" y="48.6" width="1" height="1.4" fill="#ce9178"/><rect x="52" y="48" width="1" height="2" fill="#ce9178"/><rect x="53" y="48.6" width="1" height="1.4" fill="#ce9178"/><rect x="54" y="48.6" width="1" height="1.4" fill="#ce9178"/><rect x="55" y="48" width="1" height="2" fill="#ce9178"/><rect x="56" y="48.6" width="1" height="1.4" fill="#ce9178"/><rect x="57" y="48" width="1" height="2" fill="#ce9178"/><rect x="58" y="48" width="1" height="2" fill="#ce9178"/><rect x="59" y="48.6" width="1" height="1.4" fill="#ce9178"/><rect x="60" y="48.6" width="1" height="1.4" fill="#ce9178"/><rect x="61" y="48.8" width="1" height="1" fill="#ce9178"/><rect x="62" y="48" width="1" height="2" fill="#179fff"/><rect x="63" y="48.8" width="1" height="1" fill="#d4d4d4"/><rect x="4" y="50" width="1" height="2" fill="#d4d4d4"/><rect x="0" y="52" width="1" height="2" fill="#d4d4d4"/></svg>
<div class="sbline"></div>
<div class="sb"></div>
<div class="panel">
<span class="tab" style="left:7px;transform:scaleX(0.913)">PROBLEMS</span>
<span class="tab" style="left:88px;transform:scaleX(0.94)">OUTPUT</span>
<span class="tab" style="left:155px;transform:scaleX(0.9375)">DEBUG CONSOLE</span>
<span class="tab act" style="left:269px;transform:scaleX(0.978)">TERMINAL</span>
<span class="tab" style="left:348px;transform:scaleX(0.90)">PORTS</span>
<div class="uline"></div>
</div>
<svg class="ic" style="left:630px;top:580px" width="255" height="30" viewBox="630 580 255 30" fill="none" stroke="#cccccc" stroke-width="1.1">
<path d="M641.3 588.6 L655.8 588.6 L654 602.2 L639.4 602.2 Z"/>
<path d="M643.6 592.3 L648.2 595.2 L643.4 598"/>
<path d="M646.3 598.7 L651.5 598.7"/>
<path d="M730.5 588 L730.5 602 M723.5 595 L737.5 595" stroke-width="1.3"/>
<path d="M742.6 593.3 L746.8 597.5 L751 593.3"/>
<rect x="763.6" y="588.6" width="13.8" height="13" rx="1.5"/>
<path d="M770.5 588.6 L770.5 601.6"/>
<path d="M788 590.8 L800 590.8 M791.3 590.8 L791.3 589.3 Q791.3 588.6 792 588.6 L796 588.6 Q796.7 588.6 796.7 589.3 L796.7 590.8 M789.8 590.8 L790.3 600.8 Q790.4 601.6 791.2 601.6 L796.8 601.6 Q797.6 601.6 797.7 600.8 L798.2 590.8 M792.6 592.8 L792.6 600 M794 592.8 L794 600 M795.4 592.8 L795.4 600"/>
<path d="M840.2 597.8 L845.5 592.3 L850.8 597.8"/>
<path d="M868.3 591.3 L877.6 600 M877.6 591.3 L868.3 600"/>
<g fill="#cccccc" stroke="none"><circle cx="814.2" cy="595.5" r="1.25"/><circle cx="819.6" cy="595.5" r="1.25"/><circle cx="825" cy="595.5" r="1.25"/></g>
</svg>
<span class="ps">powershell</span>
<div class="tr" style="top:628.8px">  <span class="badge"> INFO </span> Running migrations.</div><div class="tr" style="top:664.8px">  2025_05_22_042056_costum_table_users <span style="color:#767676">.......................................................</span> <span style="color:#8c8c8c">17.73ms</span> <b style="color:#23d18b">DONE</b></div><div class="tr" style="top:700.8px">PS D:\Laravel\laravel-sisfo&gt; <span style="color:#e5e510">php</span> artisan make:seeder AdminSeeder</div><div class="tr" style="top:736.8px">  <span class="badge"> INFO </span> Seeder [<b style="color:#e5e5e5">D:\Laravel\laravel-sisfo\database\seeders\AdminSeeder.php</b>] created successfully.</div><div class="tr" style="top:772.8px">PS D:\Laravel\laravel-sisfo&gt; <span style="color:#e5e510">php</span> artisan db:seed <span style="color:#808080">--class=AdminSeeder</span></div><div class="tr" style="top:808.8px">  <span class="badge"> INFO </span> Seeding database.</div><div class="tr" style="top:844.8px"><span style="color:#0dbc79">User Admin berhasil ditambahkan</span></div><div class="tr" style="top:862.8px">PS D:\Laravel\laravel-sisfo&gt; <span class="tcur"></span></div>
</body></html>
